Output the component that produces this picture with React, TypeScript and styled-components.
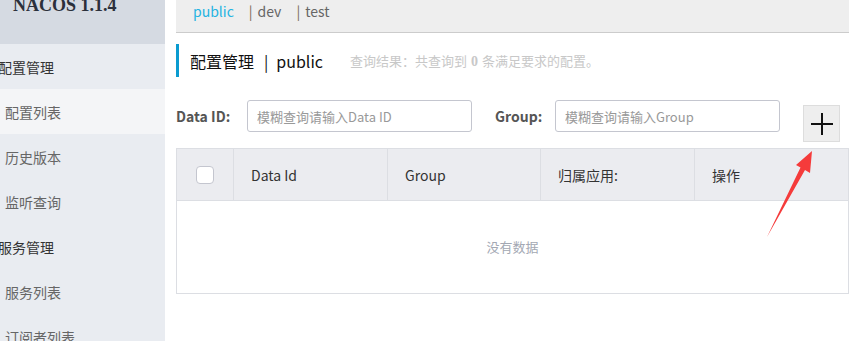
import React from "react";
import styled, { createGlobalStyle } from "styled-components";

const Global = createGlobalStyle`
  html, body { margin: 0; padding: 0; background: #fff; }
  body { font-family: "Noto Sans CJK SC", "Noto Sans", sans-serif; }
  * { box-sizing: border-box; }
`;

const Page = styled.div`
  position: relative;
  display: flex;
  width: 855px;
  height: 341px;
  overflow: hidden;
`;

const Sidebar = styled.aside`
  width: 165px;
  flex: none;
  background: #e9ecf1;
  display: flex;
  flex-direction: column;
`;

const Brand = styled.div`
  height: 44px;
  flex: none;
  background: #d5dae2;
  padding-left: 13px;
  overflow: hidden;
`;

const BrandText = styled.div`
  margin-top: -4px;
  font-family: "Liberation Serif", serif;
  font-weight: bold;
  font-size: 18px;
  line-height: 18px;
  color: #2b303b;
  white-space: nowrap;
`;

const MenuRow = styled.div<{ $group?: boolean; $active?: boolean }>`
  height: 45px;
  flex: none;
  display: flex;
  align-items: center;
  padding-left: ${(p) => (p.$group ? "0" : "5px")};
  font-size: 14px;
  color: ${(p) => (p.$group ? "#333" : "#666")};
  background: ${(p) => (p.$active ? "#f4f5f7" : "transparent")};
  white-space: nowrap;
  span {
    margin-left: ${(p) => (p.$group ? "-2px" : "0")};
  }
`;

const Main = styled.main`
  flex: 1;
  padding: 0 6px 0 11px;
  display: flex;
  flex-direction: column;
`;

const TopBar = styled.div`
  height: 33px;
  flex: none;
  background: #eeeeee;
  border-bottom: 1px solid #cccccc;
  display: flex;
  align-items: center;
  padding-left: 17px;
  padding-bottom: 11px;
  font-size: 14px;
  gap: 15px;
`;

const Tab = styled.span<{ $active?: boolean }>`
  color: ${(p) => (p.$active ? "#25b4e2" : "#666")};
  display: flex;
  gap: 5px;
  align-items: center;
`;

const Sep = styled.span`
  color: #7a6a55;
`;

const TitleRow = styled.div`
  margin-top: 11px;
  height: 33px;
  flex: none;
  border-left: 3px solid #0a9bd0;
  padding-left: 11px;
  display: flex;
  align-items: center;
`;

const Title = styled.div`
  font-size: 16px;
  color: #111;
  display: flex;
  align-items: center;
  white-space: nowrap;
`;

const TitleBar = styled.span`
  margin: 0 8px 0 10px;
`;

const Summary = styled.div`
  margin-left: 27px;
  font-size: 13px;
  color: #c8c8c8;
  white-space: nowrap;
  b {
    font-family: "Liberation Serif", serif;
    font-size: 14px;
    margin: 0 4px;
  }
`;

const FilterRow = styled.div`
  margin-top: 23px;
  display: flex;
  align-items: flex-start;
  flex: none;
`;

const Label = styled.label<{ $w: number; $ml?: number }>`
  width: ${(p) => p.$w}px;
  margin-left: ${(p) => p.$ml ?? 0}px;
  height: 32px;
  line-height: 32px;
  font-size: 14px;
  font-weight: bold;
  color: #555;
  white-space: nowrap;
`;

const Input = styled.input`
  width: 225px;
  height: 32px;
  border: 1px solid #c4c6cf;
  border-radius: 3px;
  padding: 0 9px;
  font-family: inherit;
  font-size: 13px;
  color: #333;
  outline: none;
  &::placeholder { color: #999; }
`;

const AddButton = styled.button`
  margin-left: 23px;
  margin-top: 5px;
  width: 37px;
  height: 37px;
  background: #eeeeee;
  border: 1px solid #dddddd;
  padding: 0;
  display: flex;
  align-items: center;
  justify-content: center;
`;

const Table = styled.div`
  margin-top: 6px;
  width: 673px;
  border: 1px solid #dcdee3;
  flex: none;
`;

const HeadRow = styled.div`
  display: grid;
  grid-template-columns: 56px 154px 153px 154px 1fr;
  height: 52px;
  background: #ebecf0;
  border-bottom: 1px solid #dcdee3;
`;

const HeadCell = styled.div<{ $center?: boolean }>`
  display: flex;
  align-items: center;
  justify-content: ${(p) => (p.$center ? "center" : "flex-start")};
  padding-left: ${(p) => (p.$center ? "0" : "17px")};
  font-size: 14px;
  color: #333;
  white-space: nowrap;
  & + & { border-left: 1px solid #dcdee3; }
`;

const Checkbox = styled.span`
  width: 18px;
  height: 18px;
  border: 1px solid #c4c6cf;
  border-radius: 4px;
  background: #fff;
`;

const Empty = styled.div`
  height: 92px;
  padding-bottom: 2px;
  display: flex;
  align-items: center;
  justify-content: center;
  font-size: 13px;
  color: #a3a8b3;
`;

const Overlay = styled.svg`
  position: absolute;
  left: 0;
  top: 0;
  pointer-events: none;
`;

export default function App() {
  return (
    <>
      <Global />
      <Page>
        <Sidebar>
          <Brand>
            <BrandText>NACOS 1.1.4</BrandText>
          </Brand>
          <MenuRow $group><span>配置管理</span></MenuRow>
          <MenuRow $active><span>配置列表</span></MenuRow>
          <MenuRow><span>历史版本</span></MenuRow>
          <MenuRow><span>监听查询</span></MenuRow>
          <MenuRow $group><span>服务管理</span></MenuRow>
          <MenuRow><span>服务列表</span></MenuRow>
          <MenuRow><span>订阅者列表</span></MenuRow>
        </Sidebar>
        <Main>
          <TopBar>
            <Tab $active>public</Tab>
            <Tab><Sep>|</Sep>dev</Tab>
            <Tab><Sep>|</Sep>test</Tab>
          </TopBar>
          <TitleRow>
            <Title>
              配置管理<TitleBar>|</TitleBar>public
            </Title>
            <Summary>
              查询结果：共查询到<b>0</b>条满足要求的配置。
            </Summary>
          </TitleRow>
          <FilterRow>
            <Label $w={71}>Data ID:</Label>
            <Input placeholder="模糊查询请输入Data ID" />
            <Label $w={60} $ml={23}>Group:</Label>
            <Input placeholder="模糊查询请输入Group" />
            <AddButton aria-label="add">
              <svg width="24" height="24" viewBox="0 0 24 24">
                <path d="M12 1v22M1 12h22" stroke="#111" strokeWidth="2" />
              </svg>
            </AddButton>
          </FilterRow>
          <Table>
            <HeadRow>
              <HeadCell $center><Checkbox /></HeadCell>
              <HeadCell>Data Id</HeadCell>
              <HeadCell>Group</HeadCell>
              <HeadCell>归属应用:</HeadCell>
              <HeadCell>操作</HeadCell>
            </HeadRow>
            <Empty>没有数据</Empty>
          </Table>
        </Main>
        <Overlay width="855" height="341" viewBox="0 0 855 341">
          <polygon
            points="812,151 810,173 805,170 767,237 800.5,167.5 796,165"
            fill="#f53b3b"
          />
        </Overlay>
      </Page>
    </>
  );
}
